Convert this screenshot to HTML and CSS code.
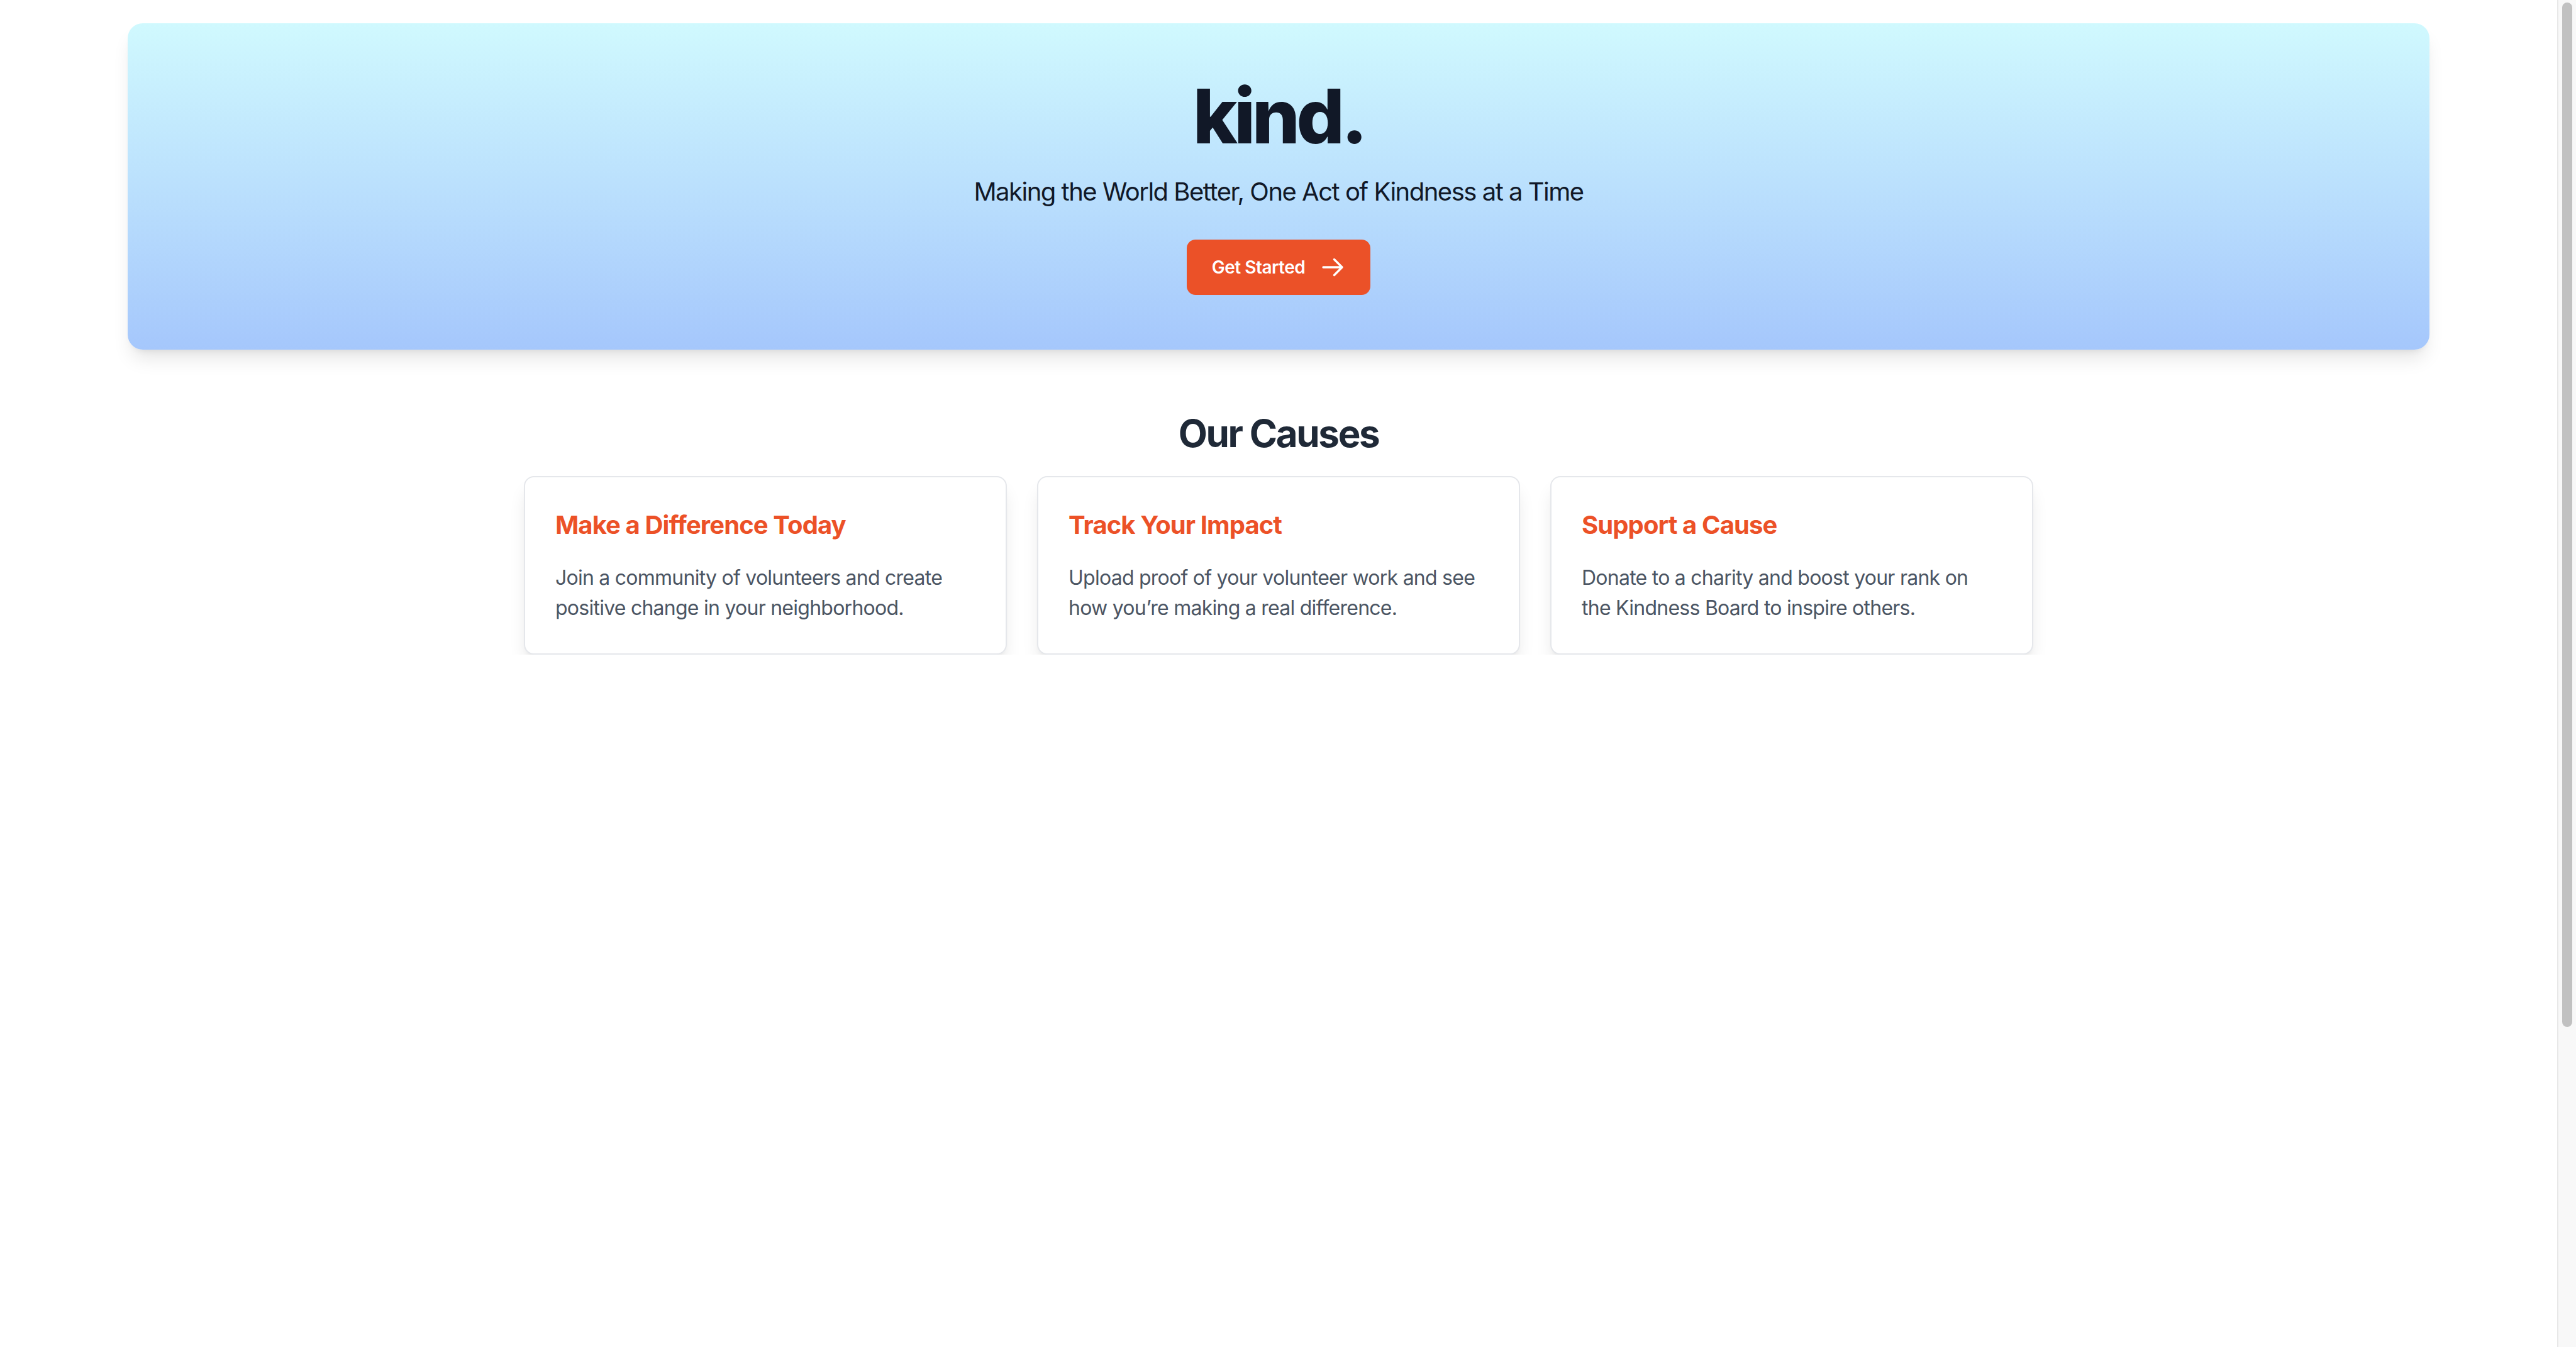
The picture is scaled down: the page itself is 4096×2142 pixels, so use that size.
FILE: index.html
```html
<!DOCTYPE html>
<html lang="en">
<head>
<meta charset="utf-8">
<title>kind.</title>
<link rel="stylesheet" href="styles.css">
</head>
<body>
<div class="page">
  <header class="hero">
    <h1 class="brand">kind.</h1>
    <p class="tagline">Making the World Better, One Act of Kindness at a Time</p>
    <a class="cta" href="#">
      <span>Get Started</span>
      <svg class="cta-icon" viewBox="0 0 24 24" fill="none" stroke="currentColor" stroke-width="2" stroke-linecap="round" stroke-linejoin="round" aria-hidden="true"><path d="M13.5 4.5 21 12m0 0-7.5 7.5M21 12H3"/></svg>
    </a>
  </header>

  <section class="causes">
    <h2 class="causes-title">Our Causes</h2>
    <div class="cards">
      <article class="card">
        <h3 class="card-title">Make a Difference Today</h3>
        <p class="card-text">Join a community of volunteers and create positive change in your neighborhood.</p>
      </article>
      <article class="card">
        <h3 class="card-title">Track Your Impact</h3>
        <p class="card-text">Upload proof of your volunteer work and see how you’re making a real difference.</p>
      </article>
      <article class="card">
        <h3 class="card-title">Support a Cause</h3>
        <p class="card-text">Donate to a charity and boost your rank on the Kindness Board to inspire others.</p>
      </article>
    </div>
  </section>
</div>
<div class="scrollbar" aria-hidden="true"><div class="scrollbar-thumb"></div></div>
</body>
</html>
```

FILE: styles.css
```css
* { box-sizing: border-box; }

html, body {
  margin: 0;
  padding: 0;
  background: #ffffff;
}

body {
  font-family: "Inter", "Liberation Sans", sans-serif;
  color: #111827;
  -webkit-font-smoothing: antialiased;
}

.page {
  width: calc(100% - 30px);
  padding-top: 37px;
}

/* window scrollbar as it appears in the reference */
.scrollbar {
  position: fixed;
  top: 0;
  right: 0;
  width: 30px;
  height: 100vh;
  background: #f8f8f8;
  border-left: 2px solid #e8e8e8;
}
.scrollbar-thumb {
  position: absolute;
  top: 4px;
  left: 6px;
  width: 16px;
  height: 1629px;
  border-radius: 8px;
  background: #c1c1c1;
}

.hero {
  width: 90%;
  margin: 0 auto;
  padding: 88px 40px 87px;
  border-radius: 24px;
  background: linear-gradient(to bottom, #d0f9fe 0%, #a5c7fc 100%);
  box-shadow: 0 20px 30px -6px rgba(0, 0, 0, 0.1), 0 8px 12px -8px rgba(0, 0, 0, 0.1);
  display: flex;
  flex-direction: column;
  align-items: center;
  text-align: center;
}

.brand {
  margin: 0 0 32px;
  font-size: 120px;
  line-height: 120px;
  font-weight: 800;
  letter-spacing: -5.5px;
  color: #111827;
}

.tagline {
  margin: 0 0 48px;
  font-size: 40px;
  line-height: 56px;
  font-weight: 400;
  letter-spacing: -1.5px;
  color: #111827;
}

.cta {
  display: inline-flex;
  align-items: center;
  gap: 24px;
  height: 88px;
  padding: 0 40px;
  border-radius: 14px;
  background: #eb5128;
  color: #ffffff;
  font-size: 28px;
  line-height: 40px;
  font-weight: 600;
  letter-spacing: -0.5px;
  text-decoration: none;
}

.cta-icon {
  width: 40px;
  height: 40px;
  display: block;
}

.causes {
  margin-top: 97px;
  display: flex;
  flex-direction: column;
  align-items: center;
}

.causes-title {
  margin: 0 0 32px;
  font-size: 60px;
  line-height: 72px;
  font-weight: 700;
  letter-spacing: -2.3px;
  color: #1f2937;
}

.cards {
  width: 2400px;
  display: grid;
  grid-template-columns: repeat(3, 1fr);
  gap: 48px;
}

.card {
  background: #ffffff;
  border: 2px solid #e5e7eb;
  border-radius: 16px;
  padding: 48px;
  box-shadow: 0 20px 30px -6px rgba(0, 0, 0, 0.11), 0 8px 12px -8px rgba(0, 0, 0, 0.11);
}

.card-title {
  margin: 0 0 32px;
  font-size: 40px;
  line-height: 56px;
  font-weight: 700;
  letter-spacing: -0.9px;
  color: #ec5127;
}

.card-text {
  margin: 0;
  font-size: 32px;
  line-height: 48px;
  letter-spacing: -0.75px;
  color: #4b5563;
}
```
